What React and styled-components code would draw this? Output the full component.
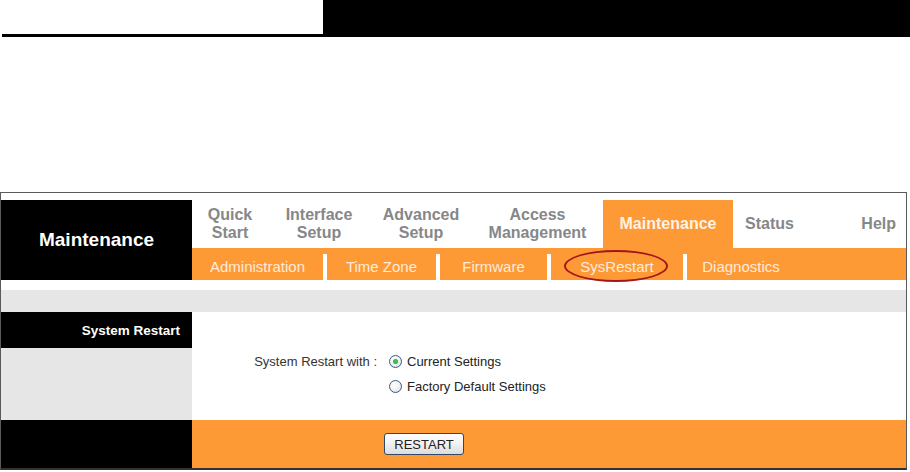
import styled, { createGlobalStyle } from "styled-components";

const GlobalStyle = createGlobalStyle`
  html, body {
    margin: 0;
    padding: 0;
    background: #ffffff;
  }
  body {
    font-family: "Liberation Sans", Arial, sans-serif;
    width: 910px;
    height: 472px;
    overflow: hidden;
  }
`;

const ORANGE = "#fe9a35";
const GREY = "#e6e6e6";

const TopStrip = styled.div`
  display: flex;
  height: 37px;
`;

const TopLeft = styled.div`
  width: 321px;
  margin-left: 2px;
  border-bottom: 3px solid #000;
  box-sizing: border-box;
`;

const TopRight = styled.div`
  flex: 1;
  background: #000;
`;

const Frame = styled.div`
  margin-top: 155px;
  width: 907px;
  box-sizing: border-box;
  border: 1px solid #5a5a5a;
  border-bottom: 2px solid #333;
  padding-top: 7px;
  background: #fff;
`;

const Header = styled.div`
  display: grid;
  grid-template-columns: 191px 1fr;
  grid-template-rows: 48px 32px;
`;

const Brand = styled.div`
  grid-row: 1 / span 2;
  background: #000;
  color: #fff;
  font-weight: bold;
  font-size: 19px;
  display: flex;
  align-items: center;
  justify-content: center;
`;

const Tabs = styled.div`
  display: flex;
  background: #fff;
`;

const Tab = styled.div`
  width: ${(p) => (p.$w ? `${p.$w}px` : "auto")};
  flex: ${(p) => (p.$w ? "none" : "1")};
  display: flex;
  align-items: center;
  justify-content: ${(p) => (p.$right ? "flex-end" : "center")};
  padding-right: ${(p) => (p.$right ? "10px" : "0")};
  text-align: center;
  font-size: 16px;
  font-weight: bold;
  line-height: 18px;
  color: ${(p) => (p.$active ? "#fff3e6" : "#868789")};
  background: ${(p) => (p.$active ? ORANGE : "transparent")};
`;

const SubNav = styled.div`
  display: flex;
  background: ${ORANGE};
`;

const SubItem = styled.div`
  position: relative;
  width: ${(p) => p.$w}px;
  box-sizing: border-box;
  padding-left: ${(p) => (p.$sep ? "4px" : "0")};
  padding-top: 5px;
  display: flex;
  align-items: center;
  justify-content: center;
  font-size: 15px;
  color: #ffeadb;

  &::before {
    content: "";
    display: ${(p) => (p.$sep ? "block" : "none")};
    position: absolute;
    left: 0;
    top: 6px;
    bottom: 0;
    width: 4px;
    background: #fff;
  }
`;

const Circled = styled.span`
  position: absolute;
  left: 17px;
  top: 2px;
  width: 104px;
  height: 32px;
  box-sizing: border-box;
  border: 2px solid #a3161c;
  border-radius: 50%;
`;

const Gap = styled.div`
  height: 10px;
`;

const Band = styled.div`
  height: 22px;
  background: ${GREY};
`;

const Body = styled.div`
  display: grid;
  grid-template-columns: 191px 1fr;
  grid-template-rows: 36px 72px 48px;
`;

const Side = styled.div`
  background: ${(p) => (p.$dark ? "#000" : GREY)};
  color: #fff;
  font-weight: bold;
  font-size: 13.5px;
  display: flex;
  align-items: center;
  justify-content: flex-end;
  padding-right: 12px;
`;

const Main = styled.div`
  background: ${(p) => (p.$orange ? ORANGE : "#fff")};
`;

const FormGrid = styled.div`
  display: grid;
  grid-template-columns: 185px 1fr;
  grid-auto-rows: 20px;
  column-gap: 11px;
  row-gap: 5px;
  padding-top: 3px;
  font-size: 13px;
`;

const FieldLabel = styled.div`
  display: flex;
  align-items: center;
  justify-content: flex-end;
  color: #333;
`;

const Option = styled.label`
  grid-column: 2;
  display: flex;
  align-items: center;
  gap: 5px;
  color: #222;
  padding-left: 1px;
`;

const Radio = styled.span`
  width: 13px;
  height: 13px;
  box-sizing: border-box;
  border-radius: 50%;
  border: 1px solid #3b5d80;
  background: radial-gradient(circle at 40% 35%, #ffffff 0%, #eef0f2 55%, #c9ced4 100%);
  display: flex;
  align-items: center;
  justify-content: center;

  &::after {
    content: "";
    display: ${(p) => (p.$checked ? "block" : "none")};
    width: 5px;
    height: 5px;
    border-radius: 50%;
    background: radial-gradient(circle, #4fd34f 0%, #1f9a1f 100%);
  }
`;

const ButtonRow = styled.div`
  height: 100%;
  display: flex;
  align-items: center;
  padding-left: 192px;
`;

const Button = styled.button`
  width: 80px;
  height: 22px;
  border: 1px solid #2d4a6a;
  border-radius: 3px;
  background: linear-gradient(#ffffff, #f1f1f1 50%, #dcdcdc);
  font-family: "Liberation Sans", Arial, sans-serif;
  font-size: 13px;
  color: #222;
  padding: 0;
`;

const tabs = [
  { label: ["Quick", "Start"], w: 76 },
  { label: ["Interface", "Setup"], w: 102 },
  { label: ["Advanced", "Setup"], w: 102 },
  { label: ["Access", "Management"], w: 131 },
  { label: ["Maintenance"], w: 130, active: true },
  { label: ["Status"], w: 73 },
  { label: ["Help"], right: true },
];

const subs = [
  { label: "Administration", w: 131 },
  { label: "Time Zone", w: 113, sep: true },
  { label: "Firmware", w: 111, sep: true },
  { label: "SysRestart", w: 136, sep: true, circled: true },
  { label: "Diagnostics", w: 112, sep: true },
];

export default function App() {
  return (
    <>
      <GlobalStyle />
      <TopStrip>
        <TopLeft />
        <TopRight />
      </TopStrip>

      <Frame>
        <Header>
          <Brand>Maintenance</Brand>
          <Tabs>
            {tabs.map((t) => (
              <Tab key={t.label.join(" ")} $w={t.w} $active={t.active} $right={t.right}>
                <span>
                  {t.label.map((line, i) => (
                    <span key={line}>
                      {i > 0 && <br />}
                      {line}
                    </span>
                  ))}
                </span>
              </Tab>
            ))}
          </Tabs>
          <SubNav>
            {subs.map((s) => (
              <SubItem key={s.label} $w={s.w} $sep={s.sep}>
                {s.label}
                {s.circled && <Circled />}
              </SubItem>
            ))}
          </SubNav>
        </Header>

        <Gap />
        <Band />

        <Body>
          <Side $dark>System Restart</Side>
          <Main />

          <Side />
          <Main>
            <FormGrid>
              <FieldLabel>System Restart with :</FieldLabel>
              <Option>
                <Radio $checked />
                Current Settings
              </Option>
              <Option>
                <Radio />
                Factory Default Settings
              </Option>
            </FormGrid>
          </Main>

          <Side $dark />
          <Main $orange>
            <ButtonRow>
              <Button>RESTART</Button>
            </ButtonRow>
          </Main>
        </Body>
      </Frame>
    </>
  );
}
